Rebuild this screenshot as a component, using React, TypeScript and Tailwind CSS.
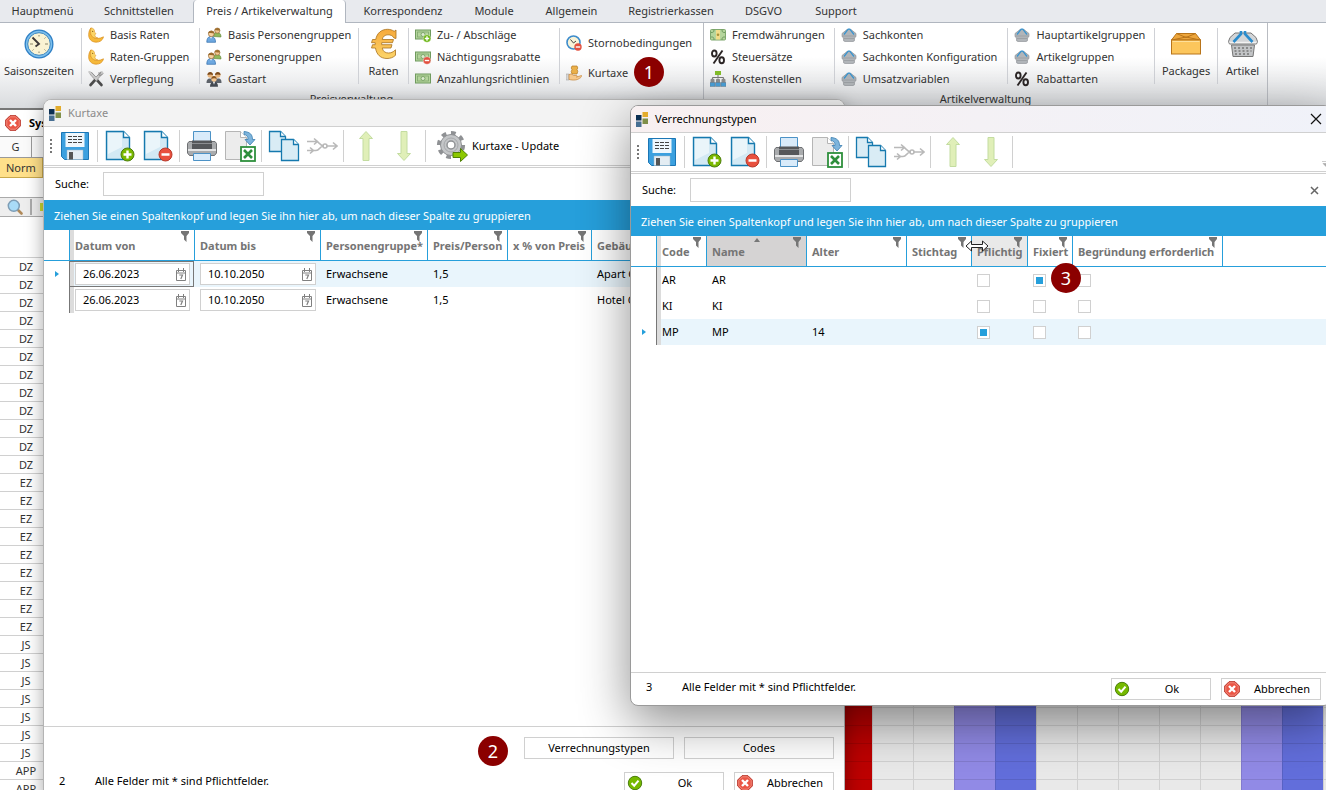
import React from "react";

/* ---------- small ribbon icons ---------- */

const Moon = () => (
  <svg viewBox="0 0 16 16" className="size-4">
    <path d="M3 .8C1.600 5 2.600 8.500 5.500 10.500C8 12 11.500 11.800 15.500 9.800C14.800 13.500 11.500 15.300 8 15.200C3 15 .5 11.500 .7 7.500C.8 4.800 1.500 2.500 3 .8Z" fill="#f6b93a" stroke="#d98c1a" strokeWidth=".7" />
    <path d="M3 1c2.500 0 4 2 3.500 4.200L8 6.500 6.800 8c.2 1.500 1.200 2.600 3 2.800-3 .8-5.500-.3-6.600-2.800C2.300 6 2.300 3 3 1Z" fill="#fbd566" stroke="#d98c1a" strokeWidth=".5" />
    <circle cx="4.700" cy="4.300" r=".6" fill="#7a4a10" />
  </svg>
);

const Cutlery = () => (
  <svg viewBox="0 0 16 16" className="size-4">
    <path d="M3 2.500 13.500 14" stroke="#4b4b4b" strokeWidth="2.600" strokeLinecap="round" />
    <path d="M13 2.500 2.500 14" stroke="#4b4b4b" strokeWidth="2.600" strokeLinecap="round" />
    <path d="M1.500 1 8.500 8.500M14 1.500 8 8" stroke="#c9c9c9" strokeWidth="2.400" strokeLinecap="round" />
    <path d="M11 1v3.500M13 .5 11.500 5M15.500 2.500 12 5" stroke="#8a8a8a" strokeWidth=".8" />
  </svg>
);

const People = () => (
  <svg viewBox="0 0 16 16" className="size-4">
    <path d="M7.500 9.500c0-3 1.300-4 3.500-4s4 1 4 4.500Z" fill="#8fb85a" stroke="#5c8034" strokeWidth=".6" />
    <circle cx="11.300" cy="3.600" r="2.600" fill="#f2c893" stroke="#8a5a26" strokeWidth=".6" />
    <path d="M8.500 3.500c0-3 5.500-3.800 5.700 0-2 .2-3.800-.6-5.700 0Z" fill="#a0702f" />
    <path d="M.8 15.300c0-4 1.500-5.800 4.200-5.800s4.500 1.800 4.500 5.800Z" fill="#6ea8e0" stroke="#2f6cab" strokeWidth=".7" />
    <path d="m4 9.800 1 2 1.200-2Z" fill="#fff" />
    <circle cx="5.300" cy="6.800" r="2.900" fill="#f6d1a0" stroke="#8a5a26" strokeWidth=".6" />
    <path d="M2.200 6.500c0-3.500 6-4 6.200 0-2-.2-4-.8-6.200 0Z" fill="#9a6a2c" />
  </svg>
);

const Team = () => (
  <svg viewBox="0 0 16 16" className="size-4">
    <path d="M.5 12c0-3 1-4.500 3.300-4.500S8 9 8 12Zm7.500 0c0-3 1-4.500 4-4.500s3.500 1.500 3.500 4.500Z" fill="#5d6269" />
    <circle cx="4.200" cy="4" r="2.700" fill="#e8b67e" />
    <circle cx="11.800" cy="4" r="2.700" fill="#e8b67e" />
    <path d="M1.400 4C1.500 0 7 0 7 4c-2-.8-3.500-.8-5.600 0ZM9 4c.1-4 5.600-4 5.600 0C12.500 3.200 11 3.200 9 4Z" fill="#7a4a1d" />
    <path d="M4 15.700c0-3.500 1.500-5 4-5s4 1.500 4 5Z" fill="#444a52" />
    <path d="m7 10.800 1 3 1-3Z" fill="#fff" />
    <circle cx="8" cy="8" r="2.700" fill="#f2c590" />
    <path d="M5.200 8c0-4 5.600-4 5.600 0C9 7 7.500 7 5.200 8Z" fill="#8a5520" />
  </svg>
);

const Note = ({ sign }: { sign?: "plus" | "minus" }) => (
  <svg viewBox="0 0 16 16" className="size-4">
    <rect x=".5" y="3" width="15" height="9" fill="#b4d49c" stroke="#6f9a5e" />
    <rect x="2.500" y="5" width="11" height="5" fill="none" stroke="#7fa86e" strokeWidth=".8" />
    <circle cx="8" cy="7.500" r="2" fill="#dcebd0" stroke="#6f9a5e" strokeWidth=".8" />
    {sign && (
      <>
        <circle cx="12" cy="11.500" r="3.800" fill={sign === "plus" ? "#6cb615" : "#e2503f"} stroke="#fff" strokeWidth=".4" />
        <path d={sign === "plus" ? "M9.800 11.500h4.400M12 9.300v4.400" : "M9.800 11.500h4.400"} stroke="#fff" strokeWidth="1.400" />
      </>
    )}
  </svg>
);

const Money = () => (
  <svg viewBox="0 0 16 16" className="size-4">
    <rect x=".5" y="2.500" width="15" height="10.500" rx="1" fill="#b5d59c" stroke="#7fa86e" />
    <path d="M1 5.500c2 0 3 0 3-3M1 10c2 0 3 0 3 3M15 5.500c-2 0-3 0-3-3M15 10c-2 0-3 0-3 3" fill="none" stroke="#6f9a5e" />
    <rect x="6" y="3" width="4" height="9.500" fill="#f2dc8a" />
    <circle cx="8" cy="7.700" r="1.300" fill="#a8923a" />
  </svg>
);

const ClockMinus = () => (
  <svg viewBox="0 0 16 16" className="size-4">
    <circle cx="7.500" cy="7.500" r="6.500" fill="#f8f3d8" stroke="#3d8ccc" strokeWidth="1.600" />
    <path d="M4.500 4.500 7.500 8 10 6" fill="none" stroke="#444" />
    <circle cx="12" cy="12" r="3.700" fill="#e2503f" />
    <path d="M9.800 12h4.400" stroke="#fff" strokeWidth="1.400" />
  </svg>
);

const HandCoins = () => (
  <svg viewBox="0 0 16 16" className="size-4">
    <path d="M6 1h5l.8 2-.8 1.500.8 1.800L11 9H6l-.8-2.500L6 4.700 5.200 3Z" fill="#eab04a" stroke="#b47a22" strokeWidth=".7" />
    <path d="M0 9h3v6H0Z" fill="#d6d6d6" stroke="#999" strokeWidth=".5" />
    <path d="M3 9.500c2-1 3.500 0 4.500 1h3c1 0 1 1.500 0 1.500l5-1.500c1 1-1 2.500-4 4-3 1-6 .5-8.500 0Z" fill="#f7c98c" stroke="#c4873d" strokeWidth=".7" />
  </svg>
);

const Percent = () => (
  <svg viewBox="0 0 16 16" className="size-4">
    <g fill="none" stroke="#2b2525">
      <ellipse cx="4.300" cy="4.500" rx="2.300" ry="3" strokeWidth="1.900" />
      <ellipse cx="11.700" cy="11.300" rx="2.300" ry="3" strokeWidth="1.900" />
      <path d="M12.500 1.500 3.500 14.500" strokeWidth="1.900" />
    </g>
  </svg>
);

const CostCenter = () => (
  <svg viewBox="0 0 16 16" className="size-4">
    <rect x="5" y="0" width="6" height="4" fill="#83bd2b" />
    <path d="M8 4v3M2.500 8V6.500h11V8" fill="none" stroke="#777" />
    <path d="M.5 8.500q2-2 4 0V12h-4ZM6 8.500q2-2 4 0V12H6ZM11.500 8.500q2-2 4 0V12h-4Z" fill="#8d8d8d" />
    <path d="M0 11.500h5v4H0zM5.500 11.500h5v4h-5zM11 11.500h5v4h-5z" fill="#4aa0d8" stroke="#6f7d88" strokeWidth=".5" />
  </svg>
);

const Basket = () => (
  <svg viewBox="0 0 16 16" className="size-4">
    <path d="M6 2.500h4L15 6.500v3.200l-1.300.8-.4 3.500-1.300.5H4L2.700 14l-.4-3.500L1 9.700V6.500Z" fill="#b1b5b9" stroke="#888c90" strokeWidth=".6" />
    <path d="M2 9h12M3 11.500h10" stroke="#9da1a5" />
    <path d="M3 7.500 7.200 2.200h1.600L13 7.500" fill="none" stroke="#3a94cf" strokeWidth="1.300" />
  </svg>
);

/* ---------- large ribbon icons ---------- */

const Clock = () => (
  <svg viewBox="0 0 32 32" className="size-8">
    <circle cx="16" cy="16" r="14.500" fill="#2f7fc4" />
    <circle cx="16" cy="16" r="13.200" fill="#7cc0ee" />
    <circle cx="16" cy="16" r="11.300" fill="#faf3d3" stroke="#3a86c2" strokeWidth="1" />
    <path d="M16 7v1.500M16 23.500V25M7 16h3M22 16h3M21.500 10.500l1-1M10.500 21.500l-1 1M21.500 21.500l1 1" stroke="#8c8668" />
    <path d="m9.500 9.500 6.500 6.500-3.500 2.500" fill="none" stroke="#3d3838" strokeWidth="1.800" />
  </svg>
);

const Euro = () => (
  <svg viewBox="0 0 32 32" className="size-8" fill="none" strokeLinejoin="round">
    <defs>
      <linearGradient id="euro" x1="0" y1="0" x2="0" y2="1">
        <stop offset="0" stopColor="#f6a93a" />
        <stop offset="1" stopColor="#fcd56a" />
      </linearGradient>
    </defs>
    <path
      d="M28 2v8.500l-2-.5C24.500 7.500 22.500 6.800 20 6.800c-3 0-5 1.500-5.800 4.700h11.300l-1 3.200H13.700v2H24l-1 3.300h-8.800c.8 3.400 3 5 6.300 5 2.500 0 4.500-.8 7-3.200v5.500c-2.500 2.200-5 3.200-8.500 3.200-6.500 0-10.500-4-11.500-10.500H3.500l1-3.300h2.700v-2H3.500l1-3.200h3.200C9 5 13.500 1.300 19.500 1.300c2.500 0 4.700.7 6.700 2Z"
      fill="url(#euro)" stroke="#a8711e" strokeWidth=".8"
    />
  </svg>
);

const Package = () => (
  <svg viewBox="0 0 32 32" className="size-8">
    <path d="M1.500 12 6.500 5.500h19L30.500 12Z" fill="#eda63c" stroke="#b8741a" />
    <path d="m6.500 5.500 9.500 4 9.500-4M2 12l14-3 14 3" fill="none" stroke="#b8741a" />
    <rect x="1.500" y="12" width="29" height="14" fill="#fcc65c" stroke="#b8741a" />
    <path d="M2.500 13.500h27" stroke="#ffe09a" />
  </svg>
);

const BasketLarge = () => (
  <svg viewBox="0 0 32 32" className="size-8">
    <path d="M3 9.500 8 5h16l5 4.500 1.500 4-1 2.500h-27l-1-2.500Z" fill="#d3d5d7" stroke="#777" />
    <path d="M4.500 17h23L26 28.500H6Z" fill="#c2c4c6" stroke="#777" />
    <path d="M7 20h18M7.500 23h17M8 26h16" stroke="#777" strokeWidth="1.600" strokeDasharray="2 2" />
    <path d="M2.500 14.500h27" stroke="#f2f2f2" strokeWidth="1.500" />
    <path d="M6.500 14 14 6V3M25.500 14 18 6V3" fill="none" stroke="#2a8ccd" strokeWidth="2.600" />
  </svg>
);

/* ---------- window toolbar icons ---------- */

const Save = () => (
  <svg viewBox="0 0 32 32" className="size-8">
    <path d="M2.500 2.500h27v27h-24l-3-3Z" fill="#3ba0df" stroke="#1b76b5" />
    <path d="M6.500 3h19v14h-19Z" fill="#eef7fd" />
    <path d="M9 6.500h14M9 9.500h14M9 12.500h14" stroke="#444" strokeWidth="1" strokeDasharray="4 1" />
    <path d="M8 20h16v9.500H8Z" fill="#e4edf3" stroke="#9fb6c6" strokeWidth=".5" />
    <path d="M10 22h4v7.500h-4Z" fill="#555" />
  </svg>
);

const Sheet = ({ sign }: { sign: "plus" | "minus" }) => (
  <svg viewBox="0 0 32 32" className="size-8">
    <path d="M2.500 1.500h17l6 6v22h-23Z" fill="#d3e9f4" stroke="#1579ae" strokeWidth="1.400" />
    <path d="M4 3h14v14L4 24Z" fill="#eaf5fa" />
    <path d="M19.500 1.500v6h6" fill="#fff" stroke="#1579ae" strokeWidth="1.400" />
    <circle cx="23.500" cy="24.500" r="6.500" fill={sign === "plus" ? "#7ab800" : "#e8503e"} stroke={sign === "plus" ? "#4b7d0a" : "#b8382a"} />
    <path d={sign === "plus" ? "M19.500 24.500h8M23.500 20.500v8" : "M19.500 24.500h8"} stroke="#fff" strokeWidth="2.400" />
  </svg>
);

const Printer = () => (
  <svg viewBox="0 0 32 32" className="size-8">
    <path d="M3 11.500h26l1.500 2V23l-2 2.500h-25L1.500 23v-9.500Z" fill="#a9abad" stroke="#6e7073" />
    <path d="M7.500 1.500h17v10h-17Z" fill="#d9ebfa" stroke="#4c92c6" />
    <path d="M6 10.500h20v8.500H6Z" fill="#55575a" />
    <path d="M6 13.500h20" stroke="#8c8e91" />
    <path d="M2 19h28v2H2Z" fill="#e3e4e5" />
    <path d="M7.500 23.500h17v7h-17Z" fill="#d9ebfa" stroke="#4c92c6" />
  </svg>
);

const Excel = () => (
  <svg viewBox="0 0 32 32" className="size-8">
    <path d="M1.500 1.500h15l6 6v22h-21Z" fill="#ececec" stroke="#b5b5b5" />
    <path d="M16.500 1.500v6h6" fill="#fff" stroke="#b5b5b5" />
    <path d="M20 1.500c6 .5 8.500 3 8.500 8H31l-5 5.500-5-5.500h3c0-3-1-4.500-4-5Z" fill="#7db4dc" stroke="#3a7eb0" strokeWidth=".8" />
    <rect x="17" y="17" width="14" height="14" fill="#fff" stroke="#2e8f3c" strokeWidth="1.800" />
    <path d="m20 20 8 8M28 20l-8 8" stroke="#2e8f3c" strokeWidth="2.600" />
  </svg>
);

const Copy = () => (
  <svg viewBox="0 0 32 32" className="size-8">
    <path d="M1.500 1.500h11l5 5v15h-16Z" fill="#d9ecf5" stroke="#1579ae" strokeWidth="1.300" />
    <path d="M12.500 1.500v5h5" fill="#fff" stroke="#1579ae" strokeWidth="1.300" />
    <path d="M13.500 9.500h12l5 5v16h-17Z" fill="#d9ecf5" stroke="#1579ae" strokeWidth="1.300" />
    <path d="M25.500 9.500v5h5" fill="#fff" stroke="#1579ae" strokeWidth="1.300" />
  </svg>
);

const Merge = () => (
  <svg viewBox="0 0 32 32" className="size-8" fill="none" stroke="#b9b9b9" strokeWidth="1.600">
    <path d="M1 11.500h9c4 0 3 4.500 8 4.500M1 20.500h9c4 0 3-4.500 8-4.500M21 16h10M27 12.500l4 3.500-4 3.500M8 8.500l3.500 3L8 14.500M4 17.500l3.500 3-3.500 3" />
    <circle cx="19" cy="16" r="2" />
  </svg>
);

const GreenArrow = ({ down }: { down?: boolean }) => (
  <svg viewBox="0 0 32 32" className="size-8">
    <path
      d={down ? "M13 1.500h6v22h3.500L16 30.500 9.500 23.500H13Z" : "M13 30.500h6v-22h3.500L16 1.500 9.500 8.500H13Z"}
      fill="#e0efb8" stroke="#c3dca0" strokeLinejoin="round"
    />
  </svg>
);

const Gear = () => (
  <svg viewBox="0 0 32 32" className="size-8">
    <circle cx="15" cy="15" r="11.800" fill="none" stroke="#8f9194" strokeWidth="4.600" strokeDasharray="4.600 4.600" />
    <circle cx="15" cy="15" r="10.500" fill="#c4c6c8" stroke="#8f9194" />
    <circle cx="15" cy="15" r="7" fill="none" stroke="#a6a8ab" />
    <circle cx="15" cy="15" r="4" fill="#fff" stroke="#8f9194" strokeWidth="1.500" />
    <path d="M17 22.500h7.500v-4l7 6.500-7 6.500v-4H17Z" fill="#8cc800" stroke="#4f8106" />
  </svg>
);

/* ---------- shared bits ---------- */

const Logo = () => (
  <svg viewBox="0 0 14 16" className="h-4 w-3.5 shrink-0">
    <path d="M1 4h5.500v5.500H1Z" fill="#0c2f52" />
    <path d="M7.500 1H13v5H7.500Z" fill="#e3ac2c" />
    <path d="M7.500 7.500H13V13H7.500Z" fill="#7f8f49" />
    <path d="M1 10.500h5.500V16H1Z" fill="#476f93" />
  </svg>
);

const Funnel = () => (
  <svg viewBox="0 0 10 11" className="absolute right-1 top-px h-[11px] w-2.5">
    <path d="M1 0h8v2L6.500 5v6L4 8.500V5L1 2Z" fill="#757575" />
  </svg>
);

const CalendarGlyph = () => (
  <svg viewBox="0 0 12 13" className="h-[13px] w-3" fill="none" stroke="#808080">
    <path d="M1.500 2.500h9v10h-9ZM1.500 5h9M3.500 0v4M8.500 0v4" />
    <path d="M4.300 7h3.200L5.800 11" strokeWidth="1.200" />
  </svg>
);

const OkIcon = () => (
  <svg viewBox="0 0 16 16" className="size-4">
    <circle cx="8" cy="8" r="6.700" fill="#76b900" stroke="#4a7e0c" />
    <path d="m4.500 8 2.700 2.700 4.300-5" fill="none" stroke="#fff" strokeWidth="2" />
  </svg>
);

const CancelIcon = () => (
  <svg viewBox="0 0 16 16" className="size-4">
    <path d="M5 .7h6L15.300 5v6L11 15.300H5L.7 11V5Z" fill="#ea5545" stroke="#b93327" />
    <path d="M5.400 1.800h5.200l3.600 3.600v5.200l-3.600 3.600H5.400l-3.600-3.600V5.400Z" fill="none" stroke="#f7a396" strokeWidth=".7" />
    <path d="m5 5 6 6M11 5l-6 6" stroke="#fff" strokeWidth="2.400" />
  </svg>
);

const Badge = ({ n, className }: { n: number; className: string }) => (
  <span className={`absolute flex size-[30px] items-center justify-center rounded-full bg-[#8b0000] text-lg text-white ${className}`}>
    {n}
  </span>
);

/* ---------- ribbon ---------- */

const tabs = [
  { label: "Hauptmenü", width: "w-[85px]" },
  { label: "Schnittstellen", width: "w-[108px]" },
  { label: "Preis / Artikelverwaltung", width: "w-[153px]", active: true },
  { label: "Korrespondenz", width: "w-[114px]" },
  { label: "Module", width: "w-[68px]" },
  { label: "Allgemein", width: "w-[87px]" },
  { label: "Registrierkassen", width: "w-[112px]" },
  { label: "DSGVO", width: "w-[73px]" },
  { label: "Support", width: "w-[72px]" },
];

type Item = { icon: React.ReactNode; label: string };

const Divider = () => <div className="ml-auto mt-1 h-14 w-px bg-[#cfd1d6]" />;

const RibbonColumn = ({ items, width }: { items: Item[]; width: string }) => (
  <div className={`flex ${width}`}>
    <div className="flex flex-col pl-1.5">
      {items.map((item) => (
        <button key={item.label} className="flex h-[22px] items-center gap-1.5 whitespace-nowrap">
          {item.icon}
          {item.label}
        </button>
      ))}
    </div>
    <Divider />
  </div>
);

const RibbonBig = ({ icon, label, width, last }: Item & { width: string; last?: boolean }) => (
  <div className={`flex ${width}`}>
    <button className="flex flex-1 flex-col items-center gap-[3px] pt-1 whitespace-nowrap">
      {icon}
      <span className="leading-4">{label}</span>
    </button>
    {!last && <Divider />}
  </div>
);

const Ribbon = () => (
  <header className="text-[#333]">
    <nav className="flex h-[23px] border-b border-[#b0b6bf] bg-[#e8eaee]">
      {tabs.map((tab) => (
        <button
          key={tab.label}
          className={`${tab.width} h-[23px] whitespace-nowrap text-center ${tab.active ? "rounded-t-sm border-x border-[#b0b6bf] bg-white" : ""}`}
        >
          {tab.label}
        </button>
      ))}
    </nav>
    <div className="flex h-[85px] bg-linear-to-b from-white from-40% to-[#d9dbde]">
      <section className="flex w-[704px] flex-col border-r border-[#b9bcc2]">
        <div className="flex h-[68px] pt-px">
          <div className="flex w-[82px] pr-0">
            <button className="flex w-[78px] flex-col items-center gap-[3px] pt-1">
              <Clock />
              <span className="leading-4">Saisonszeiten</span>
            </button>
            <Divider />
          </div>
          <RibbonColumn
            width="w-[118px]"
            items={[
              { icon: <Moon />, label: "Basis Raten" },
              { icon: <Moon />, label: "Raten-Gruppen" },
              { icon: <Cutlery />, label: "Verpflegung" },
            ]}
          />
          <RibbonColumn
            width="w-[159px]"
            items={[
              { icon: <People />, label: "Basis Personengruppen" },
              { icon: <People />, label: "Personengruppen" },
              { icon: <Team />, label: "Gastart" },
            ]}
          />
          <RibbonBig icon={<Euro />} label="Raten" width="w-[50px]" />
          <RibbonColumn
            width="w-[151px]"
            items={[
              { icon: <Note sign="plus" />, label: "Zu- / Abschläge" },
              { icon: <Note sign="minus" />, label: "Nächtigungsrabatte" },
              { icon: <Note />, label: "Anzahlungsrichtlinien" },
            ]}
          />
          <div className="flex flex-col gap-2 pl-1.5 pt-2">
            <button className="flex h-[22px] items-center gap-1.5 whitespace-nowrap">
              <ClockMinus /> Stornobedingungen
            </button>
            <button className="flex h-[22px] items-center gap-1.5 whitespace-nowrap">
              <HandCoins /> Kurtaxe
            </button>
          </div>
        </div>
        <p className="text-center leading-4">Preisverwaltung</p>
      </section>
      <section className="flex w-[564px] flex-col border-r border-[#b9bcc2]">
        <div className="flex h-[68px] pt-px">
          <RibbonColumn
            width="w-[131px]"
            items={[
              { icon: <Money />, label: "Fremdwährungen" },
              { icon: <Percent />, label: "Steuersätze" },
              { icon: <CostCenter />, label: "Kostenstellen" },
            ]}
          />
          <RibbonColumn
            width="w-[174px]"
            items={[
              { icon: <Basket />, label: "Sachkonten" },
              { icon: <Basket />, label: "Sachkonten Konfiguration" },
              { icon: <Basket />, label: "Umsatzvariablen" },
            ]}
          />
          <RibbonColumn
            width="w-[147px]"
            items={[
              { icon: <Basket />, label: "Hauptartikelgruppen" },
              { icon: <Basket />, label: "Artikelgruppen" },
              { icon: <Percent />, label: "Rabattarten" },
            ]}
          />
          <RibbonBig icon={<Package />} label="Packages" width="w-[63px]" />
          <RibbonBig icon={<BasketLarge />} label="Artikel" width="w-[49px]" last />
        </div>
        <p className="text-center leading-4">Artikelverwaltung</p>
      </section>
    </div>
  </header>
);

/* ---------- room plan behind the windows ---------- */

const rooms = [
  ...Array(12).fill("DZ"),
  ...Array(9).fill("EZ"),
  ...Array(7).fill("JS"),
  ...Array(2).fill("APP"),
];

const days = [
  "bg-[#e9e9e9]", "bg-[#e9e9e9]", "bg-[#918ae6]", "bg-[#626edb]",
  "bg-[#e9e9e9]", "bg-[#e9e9e9]", "bg-[#e9e9e9]", "bg-[#e9e9e9]", "bg-[#e9e9e9]",
  "bg-[#918ae6]", "bg-[#626edb]", "bg-[#e9e9e9]",
];

const RoomPlan = () => (
  <main className="border-t-2 border-[#777] bg-white text-[#333]">
    <div className="flex h-[27px] items-center gap-2 border-b border-[#999] pl-[5px] font-bold text-black">
      <CancelIcon /> System
    </div>
    <div className="flex h-[21px] items-center border-b border-[#999] bg-[#fafafa]">
      <span className="w-8 border-r border-[#999] text-center leading-5">G</span>
    </div>
    <div className="flex h-5">
      <span className="w-[43px] border-r border-b border-[#c9a94c] bg-[#ffe08a] pl-1.5 leading-5">Norm</span>
    </div>
    <div className="mt-[19px] flex h-5 items-center border-y border-[#aaa] bg-[#eee]">
      <span className="flex w-8 justify-center border-r-2 border-[#aaa]">
        <svg viewBox="0 0 16 16" className="size-4">
          <path d="m10.500 10.500 4 4" stroke="#b08a5a" strokeWidth="2.600" strokeLinecap="round" />
          <circle cx="6.800" cy="6.800" r="5.500" fill="#a9dbf7" stroke="#7e9db5" strokeWidth="1.500" />
        </svg>
      </span>
      <span className="ml-2 h-2 w-3 bg-[#c8d832]" />
    </div>
    <table className="mt-10 w-full table-fixed border-collapse">
      <colgroup>
        <col className="w-[52px]" />
        <col className="w-[792px]" />
        <col className="w-7" />
        {days.map((_, i) => <col key={i} className="w-[41px]" />)}
      </colgroup>
      <tbody>
        {rooms.map((room, i) => (
          <tr key={i} className="h-[18px]">
            <td className="h-[18px] border-t border-[#d0d0d0] p-0 text-center leading-[17px]">{room}</td>
            <td className="border-t border-[#d0d0d0] p-0" />
            <td className="border-t border-[#a80000] bg-[#bd0000] p-0" />
            {days.map((day, j) => (
              <td key={j} className={`border-l border-t border-black/10 p-0 ${day}`} />
            ))}
          </tr>
        ))}
      </tbody>
    </table>
  </main>
);

/* ---------- windows ---------- */

const ToolGroup = ({ children }: { children: React.ReactNode }) => (
  <div className="flex h-8 w-[82px] items-center justify-center border-l border-[#d0d0d0]">{children}</div>
);

const Tool = ({ label, children }: { label: string; children: React.ReactNode }) => (
  <button aria-label={label} className="flex w-[38px] justify-center">{children}</button>
);

const Toolbar = ({ children }: { children?: React.ReactNode }) => (
  <div className="flex h-10 shrink-0 items-center border-y border-[#d0d0d0]">
    <div className="flex w-[53px] items-center pl-1.5">
      <span className="mr-1 h-3.5 border-l-2 border-dotted border-[#777]" />
      <Tool label="Speichern"><Save /></Tool>
    </div>
    <ToolGroup>
      <Tool label="Neu"><Sheet sign="plus" /></Tool>
      <Tool label="Löschen"><Sheet sign="minus" /></Tool>
    </ToolGroup>
    <ToolGroup>
      <Tool label="Drucken"><Printer /></Tool>
      <Tool label="Excel"><Excel /></Tool>
    </ToolGroup>
    <ToolGroup>
      <Tool label="Kopieren"><Copy /></Tool>
      <Tool label="Zusammenführen"><Merge /></Tool>
    </ToolGroup>
    <ToolGroup>
      <Tool label="Nach oben"><GreenArrow /></Tool>
      <Tool label="Nach unten"><GreenArrow down /></Tool>
    </ToolGroup>
    <div className="flex h-8 flex-1 items-center border-l border-[#d0d0d0]">{children}</div>
  </div>
);

const SearchRow = ({ id, children }: { id: string; children?: React.ReactNode }) => (
  <div className="mt-px flex h-[33px] shrink-0 items-center border-t border-[#d0d0d0] pr-2 pl-[11px]">
    <label htmlFor={id} className="w-12">Suche:</label>
    <input id={id} type="text" className="h-6 w-[161px] border border-[#d0d0d0] px-1 outline-none" />
    {children}
  </div>
);

const GroupBar = () => (
  <p className="h-[30px] shrink-0 bg-[#269fdb] pl-2.5 leading-[31px] text-white">
    Ziehen Sie einen Spaltenkopf und legen Sie ihn hier ab, um nach dieser Spalte zu gruppieren
  </p>
);

const Head = ({ children, className = "" }: { children?: React.ReactNode; className?: string }) => (
  <th className={`relative h-[31px] overflow-hidden border-b border-l border-[#269fdb] pt-0.5 pl-[5px] text-left font-bold whitespace-nowrap text-[#757575] ${className}`}>
    {children}
    <Funnel />
  </th>
);

const Marker = ({ active }: { active?: boolean }) => (
  <td className="h-[26px] bg-white p-0">
    {active && (
      <svg viewBox="0 0 4 6" className="mx-auto h-1.5 w-1">
        <path d="M0 0 4 3 0 6Z" fill="#269fdb" />
      </svg>
    )}
  </td>
);

const firstCell = "border-l border-[#777] shadow-[inset_4px_0_0_#dcdcdc]";

const DialogButtons = () => (
  <div className="ml-auto flex gap-2.5">
    <button className="flex h-[22px] w-[100px] items-center border border-[#d0d0d0] bg-white pl-0.5">
      <OkIcon />
      <span className="flex-1 pl-1 text-center">Ok</span>
    </button>
    <button className="flex h-[22px] w-[100px] items-center border border-[#d0d0d0] bg-white pl-0.5">
      <CancelIcon />
      <span className="flex-1 pl-1 text-center">Abbrechen</span>
    </button>
  </div>
);

const DateField = ({ label, value }: { label: string; value: string }) => (
  <div className="mr-1 ml-[5px] flex h-[22px] items-center border border-[#d0d0d0] bg-white pr-0.5">
    <input aria-label={label} defaultValue={value} className="w-full min-w-0 bg-transparent pl-[7px] outline-none" />
    <button aria-label="Kalender"><CalendarGlyph /></button>
  </div>
);

const taxes = [
  { from: "26.06.2023", to: "10.10.2050", group: "Erwachsene", price: "1,5", building: "Apart G" },
  { from: "26.06.2023", to: "10.10.2050", group: "Erwachsene", price: "1,5", building: "Hotel G" },
];

const KurtaxeWindow = () => (
  <section className="absolute top-[99px] left-[43px] flex h-[700px] w-[802px] flex-col overflow-hidden rounded-lg border border-[#b4b4b4] bg-white shadow-[0_4px_18px_rgba(0,0,0,0.35)]">
    <h2 className="flex h-[26px] shrink-0 items-center gap-1.5 bg-[#f3f3f3] pl-1 text-[#8a8a8a]">
      <Logo /> Kurtaxe
    </h2>
    <Toolbar>
      <button className="flex items-center gap-1 pl-2.5">
        <Gear /> Kurtaxe - Update
      </button>
    </Toolbar>
    <SearchRow id="search-tax" />
    <GroupBar />
    <table className="w-full table-fixed border-separate border-spacing-0">
      <colgroup>
        <col className="w-[25px]" />
        <col className="w-[125px]" />
        <col className="w-[126px]" />
        <col className="w-[107px]" />
        <col className="w-20" />
        <col className="w-[84px]" />
        <col />
      </colgroup>
      <thead>
        <tr>
          <td className="border-b border-[#269fdb]" />
          <Head className="shadow-[inset_4px_0_0_#dcdcdc]">Datum von</Head>
          <Head>Datum bis</Head>
          <Head>Personengruppe*</Head>
          <Head>Preis/Person</Head>
          <Head>x % von Preis</Head>
          <Head>Gebäude</Head>
        </tr>
      </thead>
      <tbody>
        {taxes.map((row, i) => (
          <tr key={row.building} className={i === 0 ? "bg-[#e9f5fc]" : ""}>
            <Marker active={i === 0} />
            <td className={`p-0 ${firstCell} ${i === 0 ? "outline -outline-offset-1 outline-[#777]" : ""}`}>
              <DateField label="Datum von" value={row.from} />
            </td>
            <td className="p-0 pl-px"><DateField label="Datum bis" value={row.to} /></td>
            <td className="py-0 pr-0 pl-1.5">{row.group}</td>
            <td className="py-0 pr-0 pl-1.5">{row.price}</td>
            <td />
            <td className="py-0 pr-0 pl-1.5">{row.building}</td>
          </tr>
        ))}
      </tbody>
    </table>
    <footer className="mt-auto h-[72px] shrink-0 border-t border-[#d0d0d0] pt-2.5 pr-2.5">
      <div className="flex justify-end gap-2.5">
        <button className="h-[22px] w-[150px] border border-[#d0d0d0]">Verrechnungstypen</button>
        <button className="h-[22px] w-[150px] border border-[#d0d0d0]">Codes</button>
      </div>
      <div className="mt-[13px] flex pl-[15px]">
        <span className="w-9 leading-[18px]">2</span>
        <span className="leading-[18px]">Alle Felder mit * sind Pflichtfelder.</span>
        <DialogButtons />
      </div>
    </footer>
  </section>
);

const types = [
  { code: "AR", name: "AR", age: "", flags: [false, true, false] },
  { code: "KI", name: "KI", age: "", flags: [false, false, false] },
  { code: "MP", name: "MP", age: "14", flags: [true, false, false] },
];

const flagNames = ["Pflichtig", "Fixiert", "Begründung erforderlich"];

const TypesWindow = () => (
  <section className="absolute top-[105px] left-[630px] flex h-[601px] w-[702px] flex-col overflow-hidden rounded-lg border border-[#9a9a9a] bg-white shadow-[0_16px_50px_rgba(0,0,0,0.45)]">
    <h2 className="flex h-[26px] shrink-0 items-center gap-1.5 bg-linear-to-r from-[#f8f0f1] to-[#f0f2f9] pr-[9px] pl-1 text-black">
      <Logo /> Verrechnungstypen
      <button aria-label="Schließen" className="ml-auto">
        <svg viewBox="0 0 12 12" className="size-3"><path d="m1 1 10 10M11 1 1 11" stroke="#111" strokeWidth="1.200" /></svg>
      </button>
    </h2>
    <Toolbar>
      <svg viewBox="0 0 8 6" className="mt-6 ml-auto mr-px h-1.5 w-2"><path d="M0 .5h8M1 2.500h6L4 5.500Z" fill="#aaa" stroke="#aaa" strokeWidth=".6" /></svg>
    </Toolbar>
    <SearchRow id="search-types">
      <button aria-label="Suche leeren" className="mr-1 ml-auto">
        <svg viewBox="0 0 9 9" className="size-[9px]"><path d="m1 1 7 7M8 1 1 8" stroke="#666" strokeWidth="1.500" /></svg>
      </button>
    </SearchRow>
    <GroupBar />
    <table className="w-full table-fixed border-separate border-spacing-0">
      <colgroup>
        <col className="w-[25px]" />
        <col className="w-[50px]" />
        <col className="w-[100px]" />
        <col className="w-[100px]" />
        <col className="w-[65px]" />
        <col className="w-14" />
        <col className="w-[45px]" />
        <col className="w-[150px]" />
        <col />
      </colgroup>
      <thead>
        <tr>
          <td className="border-b border-[#269fdb]" />
          <Head className="shadow-[inset_4px_0_0_#dcdcdc]">Code</Head>
          <Head className="bg-[#d5d3d3]">
            Name
            <svg viewBox="0 0 6 4" className="absolute top-0.5 left-[47px] h-1 w-1.5"><path d="M0 4 3 0l3 4Z" fill="#777" /></svg>
          </Head>
          <Head>Alter</Head>
          <Head>Stichtag</Head>
          <Head className="bg-[#e9e9e9]">Pflichtig</Head>
          <Head>Fixiert</Head>
          <Head>Begründung erforderlich</Head>
          <td className="border-b border-l border-[#269fdb]" />
        </tr>
      </thead>
      <tbody>
        {types.map((row) => (
          <tr key={row.code} className={row.age ? "bg-[#e9f5fc]" : ""}>
            <Marker active={row.age !== ""} />
            <td className={`py-0 pr-0 pl-[5px] ${firstCell}`}>{row.code}</td>
            <td className="py-0 pr-0 pl-1.5">{row.name}</td>
            <td className="py-0 pr-0 pl-1.5">{row.age}</td>
            <td />
            {row.flags.map((flag, i) => (
              <td key={i} className="py-0 pr-0 pl-1.5">
                <input
                  type="checkbox"
                  aria-label={flagNames[i]}
                  defaultChecked={flag}
                  className="block size-[13px] appearance-none border border-[#d0d0d0] bg-white checked:bg-[#269fdb] checked:shadow-[inset_0_0_0_2px_white]"
                />
              </td>
            ))}
            <td />
          </tr>
        ))}
      </tbody>
    </table>
    <footer className="mt-auto flex h-[33px] shrink-0 border-t border-[#d0d0d0] pt-[5px] pr-2.5 pl-[15px]">
      <span className="w-9 leading-[18px]">3</span>
      <span className="leading-[18px]">Alle Felder mit * sind Pflichtfelder.</span>
      <DialogButtons />
    </footer>
  </section>
);

const App: React.FC = () => {
  return (
    <div className="relative h-screen overflow-hidden bg-white font-['Noto_Sans','Open_Sans',sans-serif] text-[11px] text-black">
      <Ribbon />
      <RoomPlan />
      <KurtaxeWindow />
      <TypesWindow />

      {/* Column resize cursor */}
      <svg viewBox="0 0 24 12" className="absolute top-60 left-[965px] h-3 w-6">
        <path d="M1 6 6.500 1v3.500h11V1L23 6l-5.500 5V7.500h-11V11Z" fill="#fff" stroke="#222" />
      </svg>

      <Badge n={1} className="top-[57px] left-[634px]" />
      <Badge n={2} className="top-[736px] left-[478px]" />
      <Badge n={3} className="top-[263px] left-[1051px]" />
    </div>
  );
};

export default App;
